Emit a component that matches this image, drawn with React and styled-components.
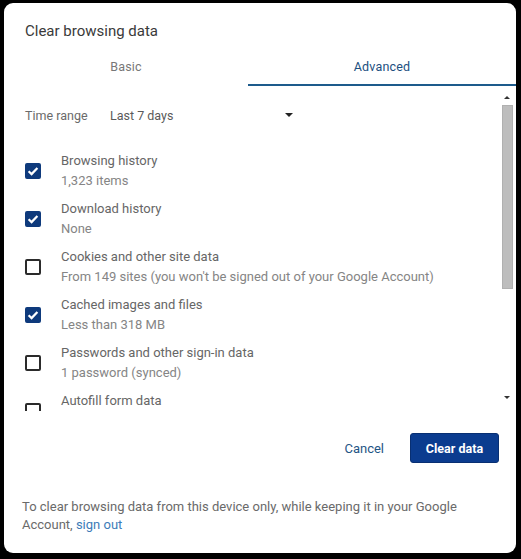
import React from "react";
import styled, { createGlobalStyle } from "styled-components";

const GlobalStyle = createGlobalStyle`
    html, body {
        margin: 0;
        padding: 0;
        background: #000;
    }
    body {
        font-family: Roboto, "Liberation Sans", sans-serif;
    }
`;

// Component Styling
const Dialog = styled.div`
    box-sizing: border-box;
    width: 512px;
    height: 550px;
    margin: 3px 0 0 4px;
    background: #fff;
    border-radius: 9px;
    display: flex;
    flex-direction: column;
    overflow: hidden;
`;

const Title = styled.h1`
    margin: 19px 0 0 21px;
    font-size: 15px;
    line-height: 18px;
    font-weight: 400;
    color: #3a3a3a;
`;

const Tabs = styled.div`
    display: grid;
    grid-template-columns: 244px 1fr;
    margin-top: 8px;
`;

const Tab = styled.div`
    height: 36px;
    display: flex;
    align-items: center;
    justify-content: center;
    font-size: 12.5px;
    letter-spacing: 0.2px;
    color: ${p => p.active ? "#1c4f80" : "#777"};
    border-bottom: 2px solid ${p => p.active ? "#1d5b8c" : "transparent"};
`;

const ScrollArea = styled.div`
    display: flex;
    height: 323px;
    margin-top: 2px;
`;

const ScrollContent = styled.div`
    flex: 1;
    overflow: hidden;
    padding: 17px 0 0 21px;
`;

const TimeRow = styled.div`
    display: flex;
    align-items: center;
    height: 20px;
    font-size: 12.5px;
    color: #6a6a6a;
`;

const TimeLabel = styled.span`
    width: 85px;
`;

const Select = styled.div`
    width: 186px;
    display: flex;
    justify-content: space-between;
    align-items: center;
    color: #5a5a5a;
`;

const Caret = styled.span`
    width: 0;
    height: 0;
    border-left: 4px solid transparent;
    border-right: 4px solid transparent;
    border-top: 4px solid #222;
    margin-right: 3px;
`;

const Items = styled.ul`
    list-style: none;
    margin: 26px 0 0;
    padding: 0;
    display: flex;
    flex-direction: column;
    gap: 8px;
`;

const Item = styled.li`
    display: flex;
    align-items: center;
`;

const Box = styled.span`
    box-sizing: border-box;
    width: 16px;
    height: 16px;
    flex: none;
    border-radius: 2px;
    background: ${p => p.checked ? "#0e3a7c" : "#fff"};
    border: 2px solid ${p => p.checked ? "#0e3a7c" : "#2b2b2b"};
    display: flex;
    align-items: center;
    justify-content: center;
`;

const ItemText = styled.div`
    margin-left: 20px;
    font-size: 13px;
    line-height: 20px;
`;

const ItemLabel = styled.div`
    color: #666;
`;

const ItemSub = styled.div`
    color: #858585;
`;

const Scrollbar = styled.div`
    width: 12px;
    margin-right: 3px;
    display: flex;
    flex-direction: column;
    align-items: center;
`;

const Arrow = styled.span`
    width: 0;
    height: 0;
    border-left: 3px solid transparent;
    border-right: 3px solid transparent;
    ${p => p.down
        ? "border-top: 3px solid #333; margin-bottom: 12px;"
        : "border-bottom: 3px solid #333; margin-top: 8px;"}
`;

const Thumb = styled.div`
    width: 11px;
    height: 184px;
    margin-top: 6px;
    background: #bdbdbd;
    border: 1px solid #b0b0b0;
    box-sizing: border-box;
`;

const Spacer = styled.div`
    flex: 1;
`;

const Actions = styled.div`
    display: flex;
    justify-content: flex-end;
    align-items: center;
    gap: 10px;
    margin-top: 22px;
    padding-right: 17px;
`;

const Button = styled.button`
    height: 30px;
    border-radius: 3px;
    font-family: Roboto, "Liberation Sans", sans-serif;
    font-size: ${p => p.primary ? "12.5px" : "13px"};
    cursor: pointer;
    padding: 0 ${p => p.primary ? "12px" : "16px"};
    min-width: ${p => p.primary ? "89px" : "auto"};
    background: ${p => p.primary ? "#0b3c8f" : "transparent"};
    color: ${p => p.primary ? "#fff" : "#1f5585"};
    font-weight: ${p => p.primary ? 700 : 400};
    border: ${p => p.primary ? "1px solid #082f72" : "none"};
`;

const Footer = styled.p`
    margin: 35px 0 0;
    padding: 0 18px;
    font-size: 13px;
    line-height: 18px;
    color: #6a6a6a;
`;

const Link = styled.a`
    color: #3d7cb8;
    text-decoration: none;
`;

const items = [
    { label: "Browsing history", sub: "1,323 items", checked: true },
    { label: "Download history", sub: "None", checked: true },
    { label: "Cookies and other site data", sub: "From 149 sites (you won't be signed out of your Google Account)", checked: false },
    { label: "Cached images and files", sub: "Less than 318 MB", checked: true },
    { label: "Passwords and other sign-in data", sub: "1 password (synced)", checked: false },
    { label: "Autofill form data", sub: "", checked: false },
];

function Check() {
    return (
        <svg width="12" height="12" viewBox="0 0 12 12">
            <path d="M1.6 6.2 L4.6 9.1 L10.4 2.9" fill="none" stroke="#fff" strokeWidth="2.2" />
        </svg>
    );
}

// Component
function App() {
    return (
        <>
            <GlobalStyle />
            <Dialog>
                <Title>Clear browsing data</Title>
                <Tabs>
                    <Tab>Basic</Tab>
                    <Tab active>Advanced</Tab>
                </Tabs>
                <ScrollArea>
                    <ScrollContent>
                        <TimeRow>
                            <TimeLabel>Time range</TimeLabel>
                            <Select>
                                <span>Last 7 days</span>
                                <Caret />
                            </Select>
                        </TimeRow>
                        <Items>
                            {items.map((item, i) =>
                                <Item key={i}>
                                    <Box checked={item.checked}>
                                        {item.checked ? <Check /> : null}
                                    </Box>
                                    <ItemText>
                                        <ItemLabel>{item.label}</ItemLabel>
                                        <ItemSub>{item.sub || "\u00a0"}</ItemSub>
                                    </ItemText>
                                </Item>
                            )}
                        </Items>
                    </ScrollContent>
                    <Scrollbar>
                        <Arrow />
                        <Thumb />
                        <Spacer />
                        <Arrow down />
                    </Scrollbar>
                </ScrollArea>
                <Actions>
                    <Button>Cancel</Button>
                    <Button primary>Clear data</Button>
                </Actions>
                <Footer>
                    To clear browsing data from this device only, while keeping it in your Google Account, <Link href="#">sign out</Link>
                </Footer>
            </Dialog>
        </>
    );
}

export default App;
